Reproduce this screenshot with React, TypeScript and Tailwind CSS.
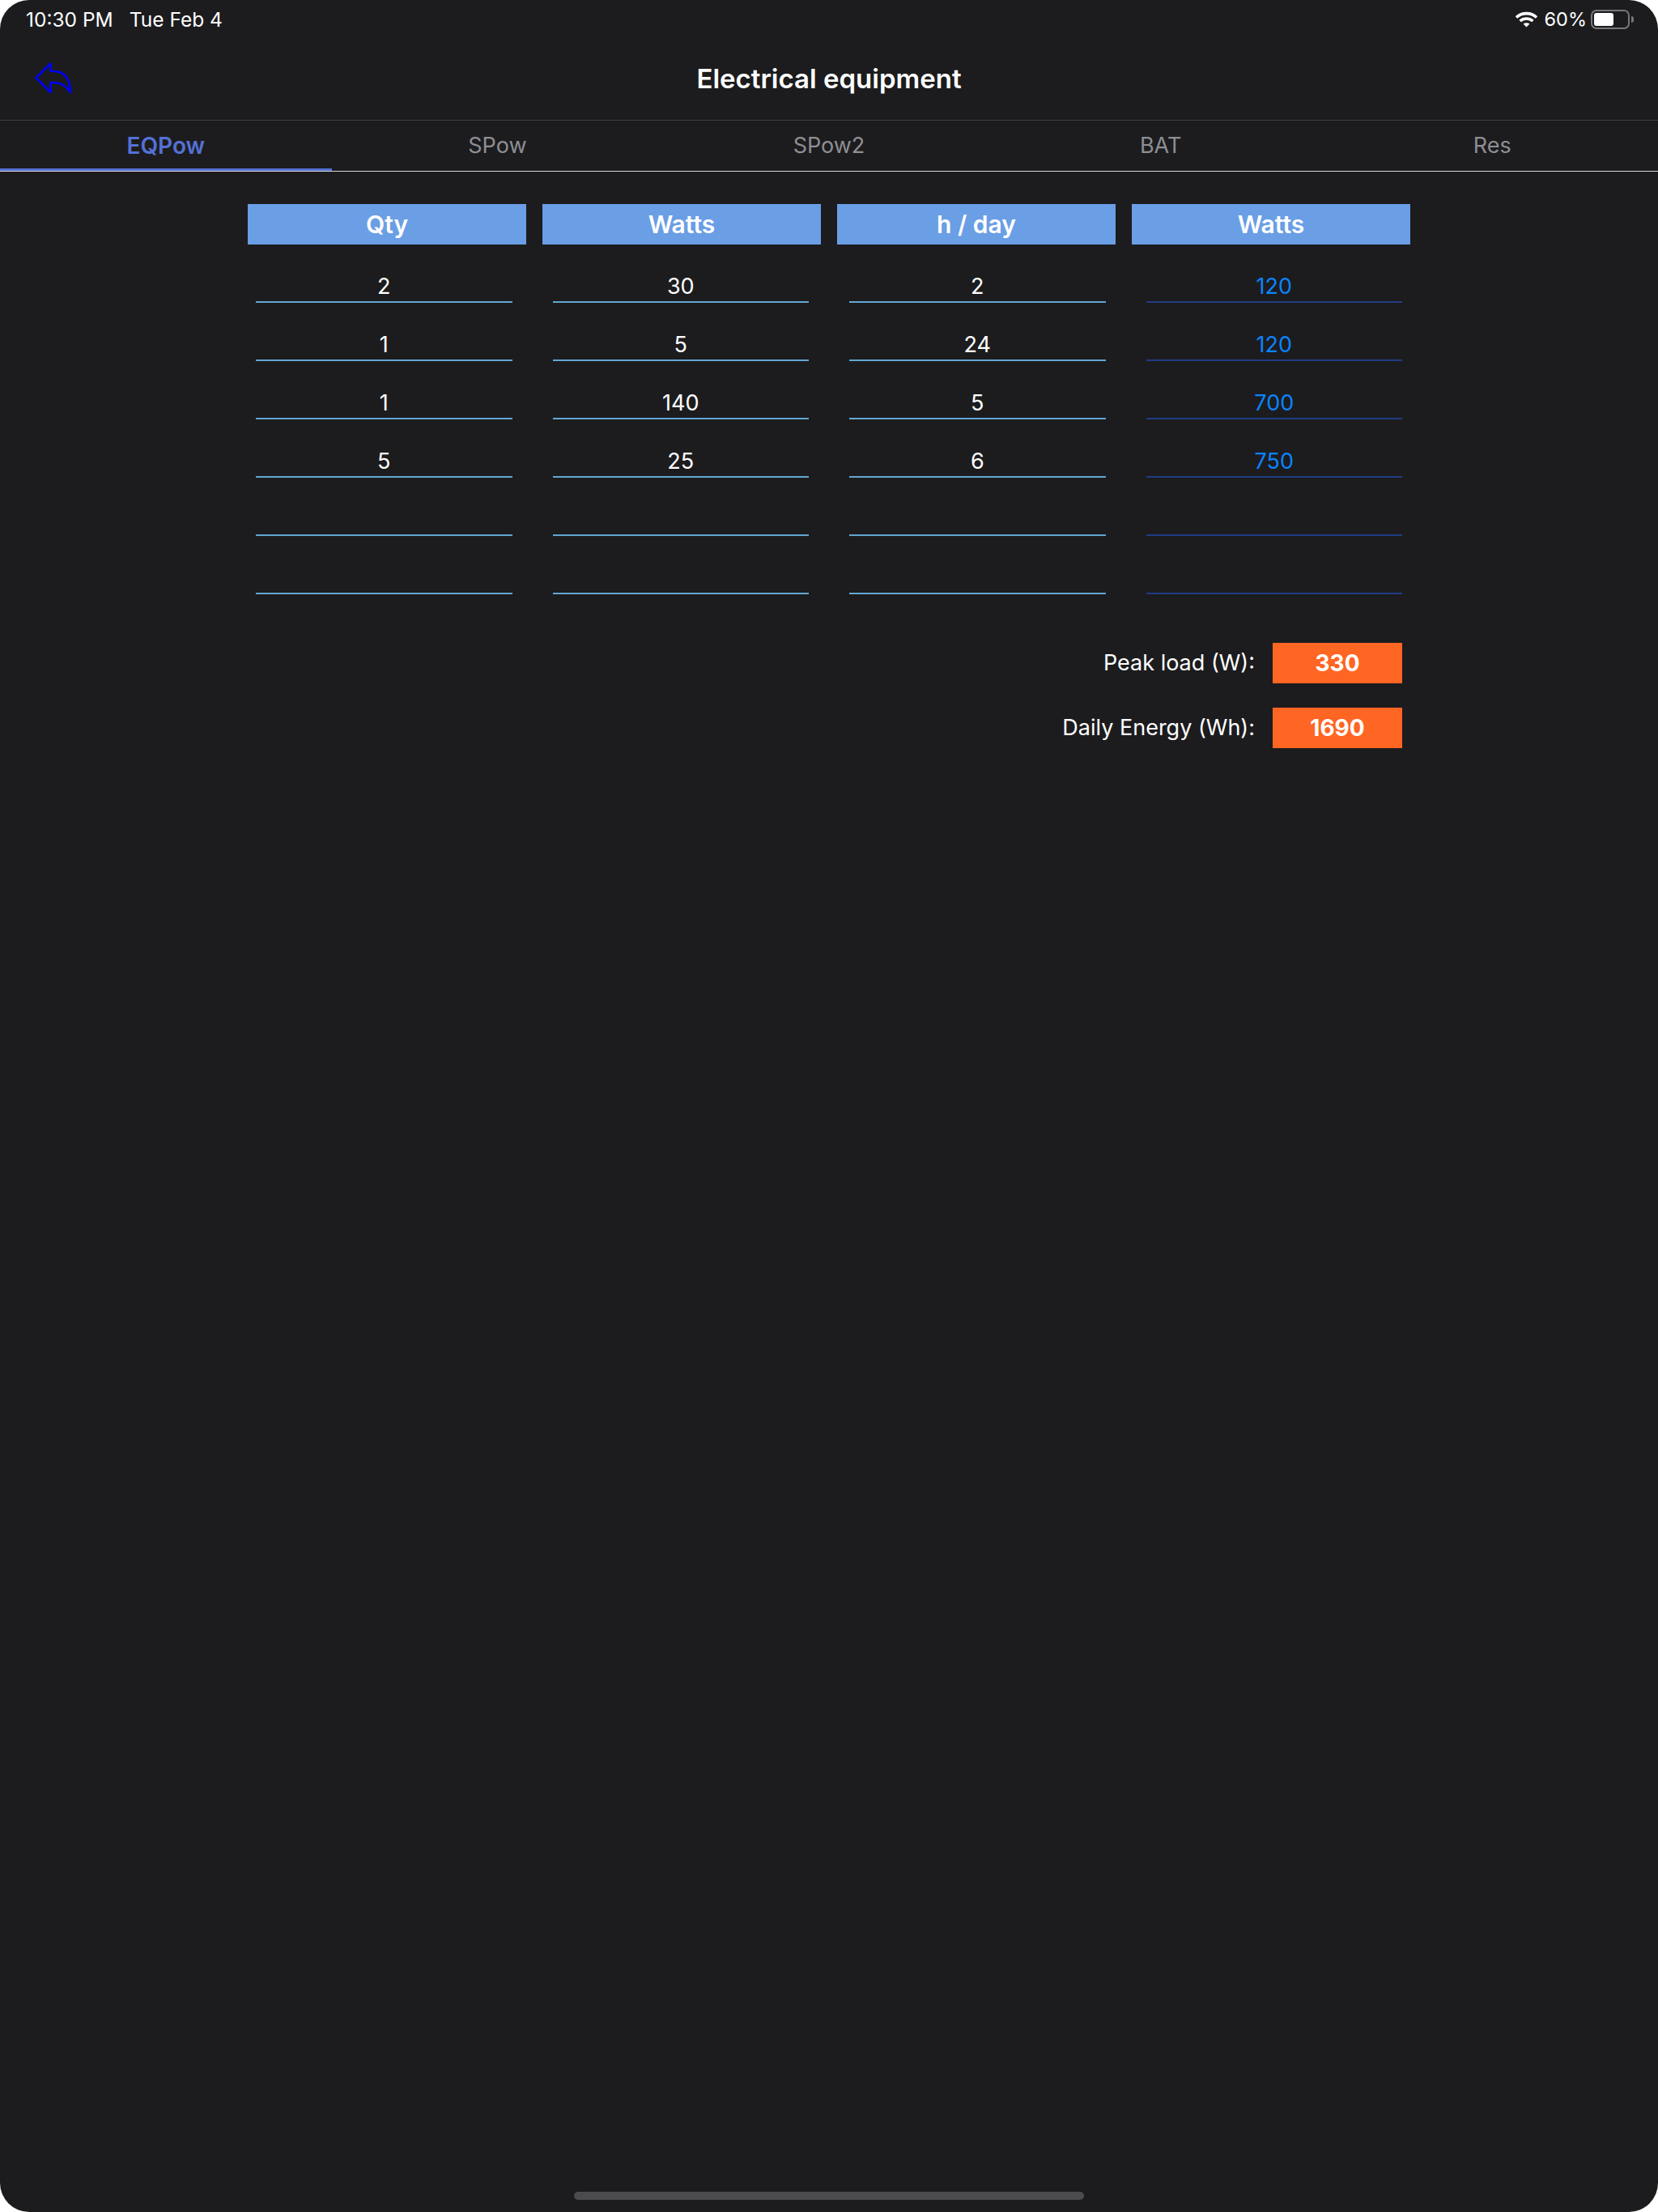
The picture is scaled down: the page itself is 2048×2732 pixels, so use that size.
const tabs = ["EQPow", "SPow", "SPow2", "BAT", "Res"];
const headers = ["Qty", "Watts", "h / day", "Watts"];
const rows = [
  ["2", "30", "2", "120"],
  ["1", "5", "24", "120"],
  ["1", "140", "5", "700"],
  ["5", "25", "6", "750"],
  ["", "", "", ""],
  ["", "", "", ""],
];

function StatusBar() {
  return (
    <div className="h-[48px] flex items-center justify-between pl-[32px] pr-[30px] text-[24.5px] text-white">
      <div className="flex gap-[20px]">
        <span>10:30 PM</span>
        <span>Tue Feb 4</span>
      </div>
      <div className="flex items-center">
        <svg width="29" height="20" viewBox="0 0 29 20" fill="none" stroke="white" strokeWidth="3.6">
          <path d="M2 7.5 C9 1 20 1 27 7.5" />
          <path d="M6.6 12 C11 8 18 8 22.4 12" />
          <path d="M14.5 19.5 L10.6 15.6 C12.8 13.9 16.2 13.9 18.4 15.6 Z" fill="white" stroke="none" />
        </svg>
        <span className="ml-[8px] text-[23.5px]">60%</span>
        <div className="ml-[5px] w-[48px] h-[24px] rounded-[7px] border-2 border-[#77777a] p-[2px]">
          <div className="w-[24px] h-full rounded-[3px] bg-white"></div>
        </div>
        <div className="ml-[2px] w-[3px] h-[8px] rounded-r-full bg-[#77777a]"></div>
      </div>
    </div>
  );
}

function BackIcon() {
  return (
    <svg width="46" height="42" viewBox="0 0 46 42" fill="none" stroke="#0000ff" strokeWidth="2.6" strokeLinejoin="round" strokeLinecap="round">
      <path d="M1.5 19 L19.5 1.5 V11 H24 C36 11 44 20 44 37 C38 28 31 25 24 25 H19.5 V37 Z" />
    </svg>
  );
}

export default function App() {
  return (
    <div className="w-[2048px] h-[2732px] bg-white overflow-hidden font-['Inter',sans-serif]">
      <div className="w-full h-full rounded-[36px] bg-[#1c1c1e] flex flex-col">
        <StatusBar />

        {/* Nav */}
        <div className="relative h-[101px] border-b border-[#3d3d3f] flex items-center justify-center">
          <div className="absolute left-[43px] top-[29px]">
            <BackIcon />
          </div>
          <h1 className="text-[33px] font-semibold text-white">Electrical equipment</h1>
        </div>

        {/* Tabs */}
        <div className="h-[63px] border-b border-[#d8d8dc] grid grid-cols-5">
          {tabs.map((tab, i) => (
            <div
              key={tab}
              className={i === 0
                ? "flex items-center justify-center pt-[3px] text-[28px] font-semibold text-[#5570d6] border-b-[3px] border-[#5570d6]"
                : "flex items-center justify-center pt-[3px] text-[27px] text-[#8e8e93] border-b-[3px] border-transparent"}
            >
              {tab}
            </div>
          ))}
        </div>

        {/* Table */}
        <div className="w-[1436px] mx-auto mt-[40px] grid grid-cols-4 gap-x-[20px]">
          {headers.map((h, i) => (
            <div key={i} className="h-[50px] bg-[#6a9ee5] flex items-center justify-center text-[30px] font-semibold text-white">
              {h}
            </div>
          ))}
        </div>
        <div className="w-[1416px] mx-auto grid grid-cols-4 gap-x-[50px]">
          {rows.flatMap((row, r) =>
            row.map((val, c) => (
              <div
                key={`${r}-${c}`}
                className={c === 3
                  ? "h-[72px] border-b-2 border-[#1f3d85] flex items-end justify-center pb-[1px] text-[27px] leading-[34px] text-[#0a84ff]"
                  : "h-[72px] border-b-2 border-[#63a7d3] flex items-end justify-center pb-[1px] text-[27px] leading-[34px] text-white"}
              >
                {val}
              </div>
            ))
          )}
        </div>

        {/* Totals */}
        <div className="w-[1416px] mx-auto mt-[60px] flex flex-col gap-[30px]">
          <div className="flex items-center justify-end gap-[22px]">
            <span className="pt-[1px] text-[27px] text-white">Peak load (W):</span>
            <div className="w-[160px] h-[50px] bg-[#ff6523] flex items-center justify-center text-[28px] font-bold text-white">330</div>
          </div>
          <div className="flex items-center justify-end gap-[22px]">
            <span className="pt-[1px] text-[27px] text-white">Daily Energy (Wh):</span>
            <div className="w-[160px] h-[50px] bg-[#ff6523] flex items-center justify-center text-[28px] font-bold text-white">1690</div>
          </div>
        </div>

        {/* Home indicator */}
        <div className="mt-auto mb-[15px] mx-auto w-[630px] h-[10px] rounded-full bg-[#4b4b4d]"></div>
      </div>
    </div>
  );
}
